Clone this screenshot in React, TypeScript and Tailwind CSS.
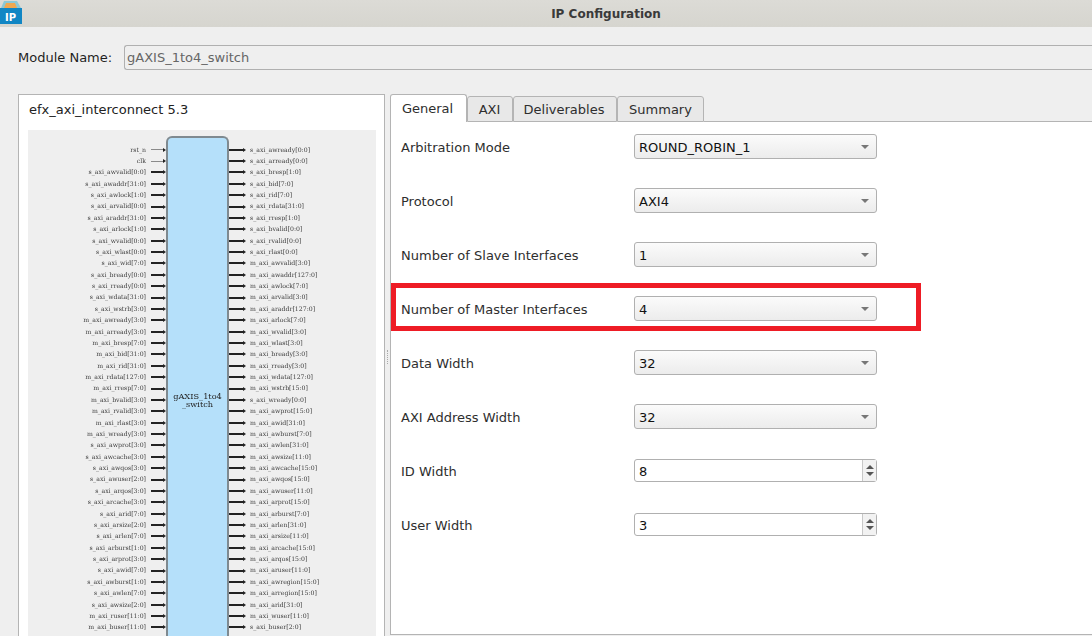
const leftPins = [
  "rst_n", "clk", "s_axi_awvalid[0:0]", "s_axi_awaddr[31:0]", "s_axi_awlock[1:0]", "s_axi_arvalid[0:0]",
  "s_axi_araddr[31:0]", "s_axi_arlock[1:0]", "s_axi_wvalid[0:0]", "s_axi_wlast[0:0]", "s_axi_wid[7:0]",
  "s_axi_bready[0:0]", "s_axi_rready[0:0]", "s_axi_wdata[31:0]", "s_axi_wstrb[3:0]", "m_axi_awready[3:0]",
  "m_axi_arready[3:0]", "m_axi_bresp[7:0]", "m_axi_bid[31:0]", "m_axi_rid[31:0]", "m_axi_rdata[127:0]",
  "m_axi_rresp[7:0]", "m_axi_bvalid[3:0]", "m_axi_rvalid[3:0]", "m_axi_rlast[3:0]", "m_axi_wready[3:0]",
  "s_axi_awprot[3:0]", "s_axi_awcache[3:0]", "s_axi_awqos[3:0]", "s_axi_awuser[2:0]", "s_axi_arqos[3:0]",
  "s_axi_arcache[3:0]", "s_axi_arid[7:0]", "s_axi_arsize[2:0]", "s_axi_arlen[7:0]", "s_axi_arburst[1:0]",
  "s_axi_arprot[3:0]", "s_axi_awid[7:0]", "s_axi_awburst[1:0]", "s_axi_awlen[7:0]", "s_axi_awsize[2:0]",
  "m_axi_ruser[11:0]", "m_axi_buser[11:0]",
];

const rightPins = [
  "s_axi_awready[0:0]", "s_axi_arready[0:0]", "s_axi_bresp[1:0]", "s_axi_bid[7:0]", "s_axi_rid[7:0]",
  "s_axi_rdata[31:0]", "s_axi_rresp[1:0]", "s_axi_bvalid[0:0]", "s_axi_rvalid[0:0]", "s_axi_rlast[0:0]",
  "m_axi_awvalid[3:0]", "m_axi_awaddr[127:0]", "m_axi_awlock[7:0]", "m_axi_arvalid[3:0]", "m_axi_araddr[127:0]",
  "m_axi_arlock[7:0]", "m_axi_wvalid[3:0]", "m_axi_wlast[3:0]", "m_axi_bready[3:0]", "m_axi_rready[3:0]",
  "m_axi_wdata[127:0]", "m_axi_wstrb[15:0]", "s_axi_wready[0:0]", "m_axi_awprot[15:0]", "m_axi_awid[31:0]",
  "m_axi_awburst[7:0]", "m_axi_awlen[31:0]", "m_axi_awsize[11:0]", "m_axi_awcache[15:0]", "m_axi_awqos[15:0]",
  "m_axi_awuser[11:0]", "m_axi_arprot[15:0]", "m_axi_arburst[7:0]", "m_axi_arlen[31:0]", "m_axi_arsize[11:0]",
  "m_axi_arcache[15:0]", "m_axi_arqos[15:0]", "m_axi_aruser[11:0]", "m_axi_awregion[15:0]", "m_axi_arregion[15:0]",
  "m_axi_arid[31:0]", "m_axi_wuser[11:0]", "s_axi_buser[2:0]",
];

const fields = [
  { label: "Arbitration Mode", value: "ROUND_ROBIN_1", kind: "select" },
  { label: "Protocol", value: "AXI4", kind: "select" },
  { label: "Number of Slave Interfaces", value: "1", kind: "select" },
  { label: "Number of Master Interfaces", value: "4", kind: "select", marked: true },
  { label: "Data Width", value: "32", kind: "select" },
  { label: "AXI Address Width", value: "32", kind: "select" },
  { label: "ID Width", value: "8", kind: "spin" },
  { label: "User Width", value: "3", kind: "spin" },
];

function Arrow({ thin }: { thin: boolean }) {
  return (
    <div className="flex items-center">
      <div className={thin ? "h-px flex-1 bg-[#8a8a8a]" : "h-[2px] flex-1 bg-[#222]"} />
      <div className="h-0 w-0 border-y-[2px] border-l-[3px] border-y-transparent border-l-[#222]" />
    </div>
  );
}

function LeftPin({ name }: { name: string }) {
  const thin = name === "rst_n" || name === "clk";
  return (
    <div className="flex h-[11.38px] items-center justify-end">
      <span className="whitespace-nowrap text-[6.2px] leading-none text-[#3c3c3c]">{name}</span>
      <div className="ml-[5px] w-[15px]">
        <Arrow thin={thin} />
      </div>
    </div>
  );
}

function RightPin({ name }: { name: string }) {
  return (
    <div className="flex h-[11.38px] items-center">
      <div className="mr-[4px] w-[17px]">
        <Arrow thin={false} />
      </div>
      <span className="whitespace-nowrap text-[6.2px] leading-none text-[#3c3c3c]">{name}</span>
    </div>
  );
}

function SelectBox({ value }: { value: string }) {
  return (
    <div className="mb-[3px] flex h-[25px] w-[243px] items-center justify-between rounded-[3px] border border-[#b0b0b0] bg-gradient-to-b from-[#fbfbfb] to-[#ececec] pl-[4px] pr-[7px] text-[#111]">
      <span className="pt-[2px]">{value}</span>
      <div className="h-0 w-0 border-x-[4px] border-t-[4px] border-x-transparent border-t-[#777]" />
    </div>
  );
}

function SpinBox({ value }: { value: string }) {
  return (
    <div className="mb-[3px] flex h-[23px] w-[243px] items-center justify-between rounded-[3px] border border-[#b0b0b0] bg-white pl-[4px] text-[#111]">
      <span className="pt-[2px]">{value}</span>
      <div className="flex h-full w-[14px] flex-col items-center justify-center gap-[3px] border-l border-[#c8c8c8] bg-[#f2f2f2]">
        <div className="h-0 w-0 border-x-[4px] border-b-[4px] border-x-transparent border-b-[#555]" />
        <div className="h-0 w-0 border-x-[4px] border-t-[4px] border-x-transparent border-t-[#555]" />
      </div>
    </div>
  );
}

export default function App() {
  return (
    <div className="flex h-[636px] w-[1092px] flex-col overflow-hidden bg-[#efefef] font-['DejaVu_Sans',sans-serif] text-[13px] text-[#2e2e2e]">
      <header className="relative flex h-[27px] shrink-0 items-center justify-center bg-gradient-to-b from-[#dcdbd6] to-[#d6d5cf] text-[12px] font-bold text-[#3a3a3a]">
        <svg className="absolute left-0 top-0" width="23" height="25" viewBox="0 0 23 25">
          <path d="M4 1h13l4 7H1z" fill="#8cc8d6" />
          <path d="M6 3h9l2 5H4z" fill="#f0a850" />
          <rect x="0" y="8" width="22" height="16" fill="#1186c4" />
          <text x="5" y="21" fill="#fff" fontSize="10" fontWeight="bold" fontFamily="DejaVu Sans">IP</text>
        </svg>
        <span className="ml-[120px]">IP Configuration</span>
      </header>

      <div className="flex shrink-0 items-center pl-[18px] pt-[18px]">
        <span className="w-[106px] text-[#1f1f1f]">Module Name:</span>
        <div className="flex h-[25px] flex-1 items-center rounded-l-[3px] border border-r-0 border-[#b0b0b0] pl-[2px] text-[#666]">
          gAXIS_1to4_switch
        </div>
      </div>

      <div className="flex min-h-0 flex-1 pl-[18px] pt-[24px]">
        <section className="flex h-[560px] w-[367px] shrink-0 flex-col border border-[#b4b4b4] bg-white pl-[9px] pr-[8px]">
          <h2 className="flex h-[35px] shrink-0 items-center pb-[6px] pl-px text-[#222]">efx_axi_interconnect 5.3</h2>
          <div className="min-h-0 flex-1 overflow-hidden bg-[#efefef]">
            <div className="flex pt-[6px] blur-[0.3px] font-['DejaVu_Serif',serif]">
              <div className="w-[138px] shrink-0 pt-[8px]">
                {leftPins.map((name) => (
                  <LeftPin key={name} name={name} />
                ))}
              </div>
              <div className="h-[600px] w-[63px] shrink-0 rounded-t-[6px] border-x-2 border-t-2 border-[#7f8a90] bg-[#b5e0fa] pt-[254px] text-center text-[8.2px] leading-[8px] text-[#222]">
                gAXIS_1to4
                <br />
                _switch
              </div>
              <div className="pt-[8px]">
                {rightPins.map((name) => (
                  <RightPin key={name} name={name} />
                ))}
              </div>
            </div>
          </div>
        </section>

        <div className="flex w-[5px] shrink-0 items-center justify-center pb-[16px]">
          <div className="h-[14px] w-px border-l border-dotted border-[#aaa]" />
        </div>

        <section className="flex h-[541px] flex-1 flex-col">
          <div className="flex h-[28px] shrink-0 items-end">
            <div className="flex h-[28px] w-[77px] items-center justify-center rounded-t-[3px] border border-b-0 border-[#b4b4b4] bg-white pr-[2px]">General</div>
            <div className="flex h-[26px] w-[46px] items-center justify-center rounded-t-[3px] border border-[#b4b4b4] bg-[#e8e8e8] pr-px pt-px">AXI</div>
            <div className="flex h-[26px] w-[104px] items-center justify-center rounded-t-[3px] border border-[#b4b4b4] bg-[#e8e8e8] pr-[2px] pt-px">Deliverables</div>
            <div className="flex h-[26px] w-[87px] items-center justify-center rounded-t-[3px] border border-[#b4b4b4] bg-[#e8e8e8] pt-px">Summary</div>
            <div className="h-px flex-1 bg-[#b4b4b4]" />
          </div>
          <div className="h-[513px] border-b border-l border-[#b4b4b4] bg-white pl-[10px]">
            <div className="-mt-px">
              {fields.map((field) => (
                <div key={field.label} className="relative flex h-[54px] items-center">
                  <span className="w-[233px] shrink-0">{field.label}</span>
                  {field.kind === "select" ? <SelectBox value={field.value} /> : <SpinBox value={field.value} />}
                  {field.marked && (
                    <div className="absolute left-[-10px] top-0 h-[48px] w-[530px] border-[5px] border-[#ee1c25]" />
                  )}
                </div>
              ))}
            </div>
          </div>
        </section>
      </div>
    </div>
  );
}
